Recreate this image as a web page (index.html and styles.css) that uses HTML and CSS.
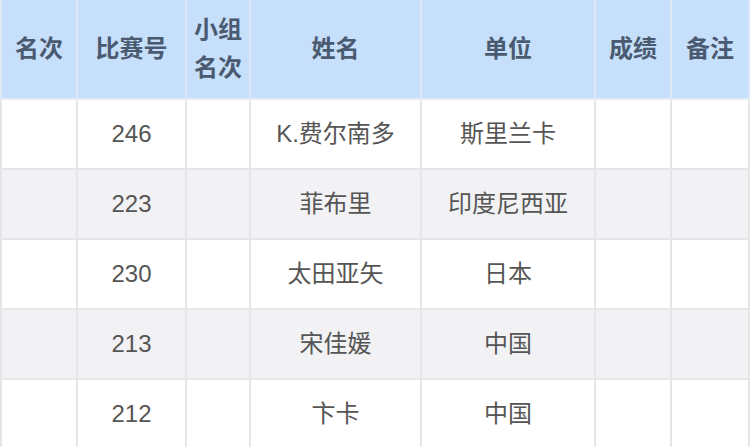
FILE: index.html
```html
<!DOCTYPE html>
<html lang="zh-CN">
<head>
<meta charset="utf-8">
<title>名单</title>
<link rel="stylesheet" href="styles.css">
</head>
<body>
<table class="list">
  <colgroup>
    <col class="c-rank">
    <col class="c-no">
    <col class="c-group">
    <col class="c-name">
    <col class="c-unit">
    <col class="c-score">
    <col class="c-note">
  </colgroup>
  <thead>
    <tr class="head">
      <th>名次</th>
      <th>比赛号</th>
      <th class="two-line">小组<br>名次</th>
      <th>姓名</th>
      <th>单位</th>
      <th>成绩</th>
      <th>备注</th>
    </tr>
  </thead>
  <tbody>
    <tr><td></td><td>246</td><td></td><td>K.费尔南多</td><td>斯里兰卡</td><td></td><td></td></tr>
    <tr><td></td><td>223</td><td></td><td>菲布里</td><td>印度尼西亚</td><td></td><td></td></tr>
    <tr><td></td><td>230</td><td></td><td>太田亚矢</td><td>日本</td><td></td><td></td></tr>
    <tr><td></td><td>213</td><td></td><td>宋佳媛</td><td>中国</td><td></td><td></td></tr>
    <tr><td></td><td>212</td><td></td><td>卞卡</td><td>中国</td><td></td><td></td></tr>
  </tbody>
</table>
</body>
</html>
```
FILE: styles.css
```css
html, body {
  margin: 0;
  padding: 0;
  background: #ffffff;
}

body {
  font-family: "Liberation Sans", "Noto Sans CJK SC", sans-serif;
  overflow: hidden;
}

.list {
  width: 750px;
  border-collapse: collapse;
  table-layout: fixed;
}

.c-rank { width: 76px; }
.c-no { width: 109px; }
.c-group { width: 64px; }
.c-name { width: 171px; }
.c-unit { width: 174px; }
.c-score { width: 76px; }
.c-note { width: 78px; }

.list th,
.list td {
  padding: 0;
  text-align: center;
  vertical-align: middle;
  font-size: 24px;
}

.list th {
  background: #c6dffa;
  color: #4a5a70;
  font-weight: 700;
  border-left: 2px solid #dde8f4;
  border-right: 2px solid #dde8f4;
  border-bottom: 2px solid #e3eaf2;
  border-top: none;
  line-height: 38px;
}

.head {
  height: 99px;
}

.list td {
  color: #555555;
  border: 2px solid #e6e6e8;
  line-height: 30px;
}

.list tbody tr {
  height: 70px;
}

.list tbody tr:nth-child(even) td {
  background: #f2f2f4;
}
```
